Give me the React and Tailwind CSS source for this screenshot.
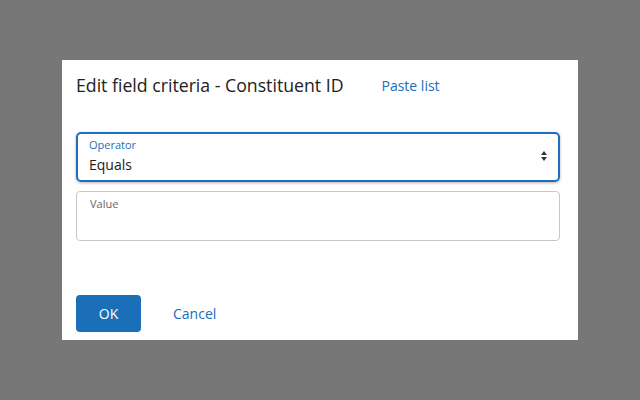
export default function App() {
  return (
    <div className="w-[640px] h-[400px] bg-[#777777] flex items-center justify-center" style={{ fontFamily: '"Open Sans", sans-serif' }}>
      <div className="w-[516px] h-[280px] bg-white flex flex-col pl-[14px] pr-[18px]">
        <div className="flex items-center h-[51px]">
          <h2 className="text-[17.7px] text-[#212121]">Edit field criteria - Constituent ID</h2>
          <button className="ml-[38px] text-[14px] text-[#1b6db8]">Paste list</button>
        </div>
        <div className="mt-[21px] h-[50px] rounded-[5px] border-2 border-[#1b6fbd] shadow-[0_1px_3px_rgba(0,0,0,0.3)] flex items-center pl-[11px] pr-[10px]">
          <div className="flex-1 flex flex-col mb-[2px]">
            <span className="text-[11px] leading-[14px] text-[#1b6fbd]">Operator</span>
            <span className="text-[14px] leading-[20px] text-[#212121] mt-[3px]">Equals</span>
          </div>
          <svg width="8" height="12" viewBox="0 0 8 12" className="mb-[2px]">
            <path d="M4 1 L7 5 L1 5 Z" fill="#333" />
            <path d="M4 11 L7 7 L1 7 Z" fill="#333" />
          </svg>
        </div>
        <div className="mt-[9px] h-[50px] rounded-[4px] border border-[#c4c8cc] pl-[13px] pt-[5px]">
          <div className="text-[11px] leading-[14px] text-[#686868]">Value</div>
        </div>
        <div className="mt-[54px] flex items-center">
          <button className="w-[65px] h-[37px] rounded-[4px] bg-[#1a6fb8] text-white text-[14px]">OK</button>
          <button className="ml-[32px] text-[14px] text-[#1b6db8]">Cancel</button>
        </div>
      </div>
    </div>
  );
}
